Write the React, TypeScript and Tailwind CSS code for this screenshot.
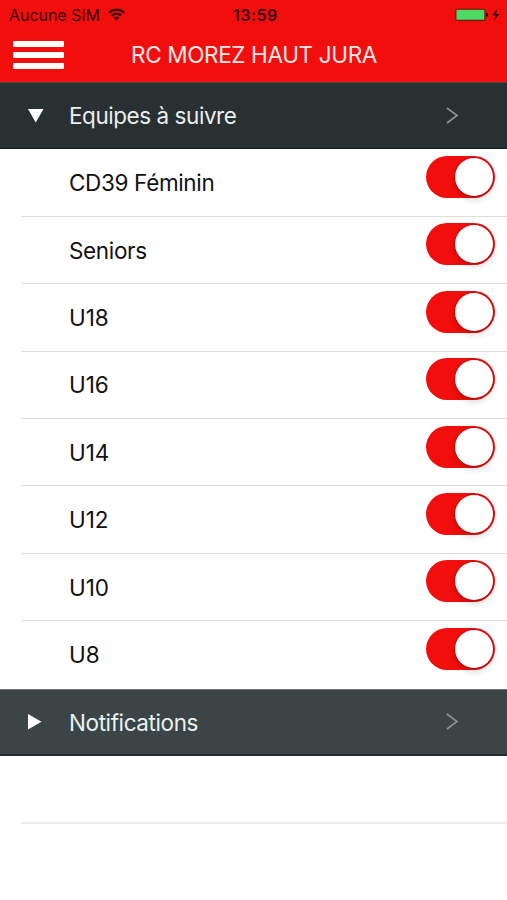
import { useState } from "react";

const teams = ["CD39 Féminin", "Seniors", "U18", "U16", "U14", "U12", "U10", "U8"];

const StatusBar: React.FC = () => {
  return (
    <div className="relative flex h-[30px] items-center justify-between pl-[9px] pr-[7px] text-[#3c0404]">
      <div className="flex items-center gap-[8px]">
        <span className="text-[16px] leading-[30px] tracking-[-0.05px]">Aucune SIM</span>
        <svg width="17" height="13" viewBox="0 0 17 13" fill="none" stroke="currentColor" strokeWidth="2.2" className="mb-px">
          <path d="M1 4.7a10.6 10.6 0 0 1 15 0" />
          <path d="M3.8 7.6a6.7 6.7 0 0 1 9.4 0" />
          <path d="M8.5 12.4L5.9 9.8a3.7 3.7 0 0 1 5.2 0z" fill="currentColor" stroke="none" />
        </svg>
      </div>
      <span className="absolute left-[233px] text-[16px] leading-[30px] font-semibold tracking-[0.5px]">13:59</span>
      <div className="flex items-center">
        <svg width="45" height="14" viewBox="0 0 45 14">
          <rect x="0.9" y="1.2" width="29" height="11.2" rx="1" fill="#4cd964" stroke="#6b1a08" strokeWidth="1.1" />
          <path d="M31 4.5c1.5.4 2.2 1.2 2.2 2.3s-.7 1.9-2.2 2.3z" fill="currentColor" />
          <path d="M42 1L37.300 7.400h3.100l-1.400 5.100 5.500-6.600h-3.200z" fill="currentColor" />
        </svg>
      </div>
    </div>
  );
};

const Chevron: React.FC = () => {
  return (
    <svg width="13" height="17" viewBox="0 0 13 17" fill="none" stroke="#8b9192" strokeWidth="1.7">
      <path d="M1 1L11 8.5L1 16" />
    </svg>
  );
};

const Toggle: React.FC<{ on: boolean; onClick: () => void }> = ({ on, onClick }) => {
  return (
    <button
      onClick={onClick}
      role="switch"
      aria-checked={on}
      className={`mb-[11px] flex h-[42px] w-[69px] items-center rounded-full px-[2px] ${on ? "justify-end bg-[#f10e0d]" : "justify-start bg-gray-300"}`}
    >
      <span className="size-[38px] rounded-full bg-white shadow-[0_4px_6px_rgba(0,0,0,0.15),0_0_2px_rgba(60,0,0,0.6)]" />
    </button>
  );
};

const App: React.FC = () => {
  const [enabled, setEnabled] = useState<boolean[]>(teams.map(() => true));
  const [open, setOpen] = useState(true);

  const toggleTeam = (index: number) => {
    setEnabled(enabled.map((value, i) => (i === index ? !value : value)));
  };

  return (
    <div className="h-[900px] w-[507px] overflow-hidden bg-white font-['Inter',sans-serif] text-[#111111]">
      <header className="h-[82px] bg-[#f10e0d]">
        <StatusBar />
        <div className="flex h-[50px] items-center pl-[13px]">
          <button className="flex w-[51px] flex-col gap-[5.6px]">
            <span className="h-[5.5px] w-full rounded-[1px] bg-white" />
            <span className="h-[5.5px] w-full rounded-[1px] bg-white" />
            <span className="h-[5.5px] w-full rounded-[1px] bg-white" />
          </button>
          <h1 className="ml-[67px] whitespace-nowrap text-[22.5px] leading-[50px] tracking-[-0.35px] text-[#ffe9e8]">RC MOREZ HAUT JURA</h1>
        </div>
      </header>

      <button
        onClick={() => setOpen(!open)}
        className="flex h-[67.4px] w-full items-center border-t border-b border-t-[#4a4747] border-b-[#171c1d] bg-[#283031] pl-[28px] pr-[48px] text-left"
      >
        <svg width="41" height="16" viewBox="0 0 41 16">
          <path d="M0 1h15.5L7.75 14.5z" fill="#fff" />
        </svg>
        <span className="flex-1 text-[22.5px] tracking-[-0.45px] text-[#e9eeee]">Equipes à suivre</span>
        <Chevron />
      </button>

      {open &&
        teams.map((team, index) => (
          <div key={team} className="h-[67.4px] pl-[21px]">
            <div className={`flex h-full items-center border-b pl-[48px] pr-[12px] ${index < teams.length - 1 ? "border-[#dedede]" : "border-transparent"}`}>
              <span className={`flex-1 pt-px text-[22.5px] ${index < 2 ? "tracking-[-0.35px]" : "tracking-[-0.1px]"}`}>{team}</span>
              <Toggle on={enabled[index]} onClick={() => toggleTeam(index)} />
            </div>
          </div>
        ))}

      <button className="flex h-[67.4px] w-full items-center border-t border-b-2 border-t-[#6c7475] border-b-[#252c2d] bg-[#3b4546] pl-[28px] pr-[48px] text-left">
        <svg width="41" height="16" viewBox="0 0 41 16">
          <path d="M0 0v15.5L13.5 7.75z" fill="#fff" />
        </svg>
        <span className="flex-1 pt-[2px] text-[22.5px] tracking-[-0.4px] text-[#e9f2f2]">Notifications</span>
        <Chevron />
      </button>
      <div className="h-[68px] pl-[21px]">
        <div className="h-full border-b-2 border-[#ececec]" />
      </div>
    </div>
  );
};

export default App;
